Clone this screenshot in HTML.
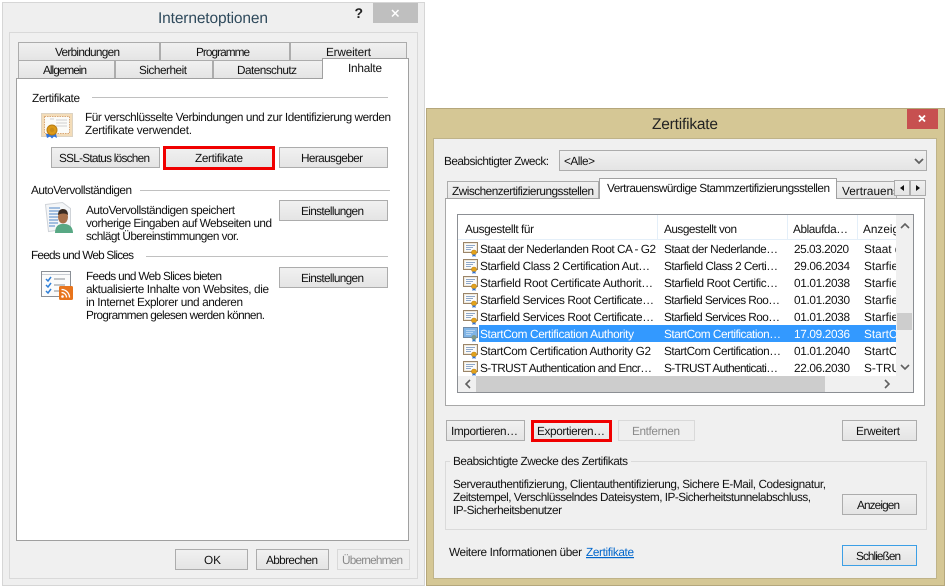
<!DOCTYPE html>
<html><head><meta charset="utf-8"><style>
html,body{margin:0;padding:0;background:#fff;width:948px;height:588px;overflow:hidden}
svg{display:block}
text{font-family:"Liberation Sans",sans-serif;font-size:11.8px;fill:#111;text-rendering:geometricPrecision}
.b{fill:url(#g);stroke:#acacac}
.d{fill:#efefef;stroke:#d9d9d9}
.t{fill:url(#g);stroke:#acacac}
.w{fill:#fff}
.dis{fill:#8a8a8a}
.l{stroke:#c0c0c0;stroke-width:1;fill:none}
.ar{fill:none;stroke:#606060;stroke-width:1.6}
</style></head><body>
<svg width="948" height="588" viewBox="0 0 948 588" xmlns="http://www.w3.org/2000/svg">
<defs>
<linearGradient id="g" x1="0" y1="0" x2="0" y2="1"><stop offset="0" stop-color="#f1f1f1"/><stop offset="1" stop-color="#e4e4e4"/></linearGradient>
<clipPath id="c1"><rect x="458" y="240" width="438" height="136"/></clipPath>
<clipPath id="c2"><rect x="836" y="180" width="58" height="18"/></clipPath>
<clipPath id="c3"><rect x="858" y="216" width="38" height="23"/></clipPath>
<symbol id="ci" viewBox="0 0 16 16" width="16" height="16">
<rect x="0.5" y="0.5" width="14" height="10" fill="#efe9dc" stroke="#9a8468"/>
<rect x="2" y="2" width="11" height="7" fill="#fbfbfb"/>
<path d="M3 3.500h9M3 5.500h7M3 7.500h5" stroke="#8fa8c8" fill="none"/>
<circle cx="11" cy="10.500" r="2.500" fill="#e2a21c" stroke="#c08412" stroke-width=".6"/>
<path d="M9.500 12.500v2.500l1.500-1 1.500 1v-2.500z" fill="#2f6fd0"/>
</symbol>
<symbol id="cs" viewBox="0 0 16 16" width="16" height="16">
<rect x="0.500" y="0.500" width="14" height="10" fill="#7fb4e6" stroke="#6f8aa6"/>
<path d="M3 3.500h9M3 5.500h7M3 7.500h5" stroke="#b8d6f2" fill="none"/>
<circle cx="11" cy="10.500" r="2.500" fill="#7f9a8a"/>
<path d="M9.500 12.500v2.500l1.500-1 1.500 1v-2.500z" fill="#2f78c8"/>
</symbol>
</defs>

<!-- LEFT DIALOG -->
<rect x="2.500" y="2.500" width="422" height="583" fill="#efefef" stroke="#d6d6d6"/>
<rect x="373" y="3" width="45" height="20" fill="#bfbfbf"/>
<path d="M392 10l6.500 6.500M398.500 10l-6.500 6.500" stroke="#fff" stroke-width="1.500" fill="none"/>
<text x="354.500" y="18" style="font-size:14px;font-weight:bold;fill:#222">?</text>
<text x="158" y="23" textLength="110" style="font-size:15.500px;fill:#2f4a5c">Internetoptionen</text>
<rect x="9.500" y="32.500" width="408" height="546" fill="#f0f0f0" stroke="#d9d9d9"/>

<!-- tabs back -->
<rect class="t" x="18.500" y="42.500" width="141" height="18"/>
<rect class="t" x="160.500" y="42.500" width="129" height="18"/>
<rect class="t" x="290.500" y="42.500" width="116" height="18"/>
<text x="55" y="56" textLength="65">Verbindungen</text>
<text x="196" y="56" textLength="54">Programme</text>
<text x="326" y="56" textLength="45">Erweitert</text>
<!-- tabs front -->
<rect class="t" x="18.500" y="60.500" width="96" height="18"/>
<rect class="t" x="115.500" y="60.500" width="97" height="18"/>
<rect class="t" x="213.500" y="60.500" width="109" height="18"/>
<text x="43" y="74" textLength="44">Allgemein</text>
<text x="139" y="74" textLength="48">Sicherheit</text>
<text x="237" y="74" textLength="60">Datenschutz</text>
<!-- panel -->
<rect x="16.500" y="78.500" width="392" height="462" fill="#fff" stroke="#a0a0a0"/>
<path d="M322.500 79V58.500H408.500V79" fill="#fff" stroke="#a0a0a0"/>
<rect x="323" y="76" width="85" height="4" fill="#fff"/>
<text x="348" y="72" textLength="34">Inhalte</text>

<text x="32" y="102" textLength="48">Zertifikate</text>
<path class="l" d="M92 97.500H388"/>
<text x="85" y="121" textLength="306">Für verschlüsselte Verbindungen und zur Identifizierung werden</text>
<text x="85" y="134" textLength="107">Zertifikate verwendet.</text>

<!-- cert icon -->
<rect x="41.500" y="113.500" width="31" height="23" fill="#f3dcb8" stroke="#dcd3c4"/>
<rect x="44.500" y="116.500" width="25" height="17" fill="#fbfbf8" stroke="#d9a878" stroke-dasharray="1.500 1"/>
<path d="M56 120h11M56 123h11M56 126h11M50 119h4" stroke="#cfcfcf" fill="none"/>
<path d="M46 134l1 4 3-1.500 2 2 2-2 3 1.500-1-4z" fill="#2f74dc"/>
<circle cx="52" cy="130" r="5" fill="#dc9a18" stroke="#b87c12"/>
<circle cx="52" cy="130" r="2.200" fill="#c98c18"/>

<rect class="b" x="51.500" y="147.500" width="108" height="20"/>
<text x="59" y="162" textLength="91">SSL-Status löschen</text>
<rect x="164.500" y="147.500" width="109" height="21" fill="url(#g)" stroke="#f00000" stroke-width="3"/>
<text x="195" y="162" textLength="48">Zertifikate</text>
<rect class="b" x="279.500" y="147.500" width="108" height="20"/>
<text x="301" y="162" textLength="62">Herausgeber</text>

<text x="31" y="194" textLength="101">AutoVervollständigen</text>
<path class="l" d="M140 190.500H390"/>
<text x="86" y="214" textLength="149">AutoVervollständigen speichert</text>
<text x="86" y="227" textLength="186">vorherige Eingaben auf Webseiten und</text>
<text x="86" y="240" textLength="153">schlägt Übereinstimmungen vor.</text>
<rect class="b" x="279.500" y="200.500" width="108" height="20"/>
<text x="301" y="215" textLength="63">Einstellungen</text>

<!-- person icon -->
<path d="M45.500 204.500L62.500 202.500L70.500 208.500V228.500L48.500 231.500Z" fill="#f4f6f8" stroke="#cfd3d8"/>
<path d="M49 208h11M49 211h11M49 214h9M49 217h9M49 220h9M49 223h9M49 226h6" stroke="#4f86c6" fill="none"/>
<path d="M55 233c0-6 3-9 7-9h3c4 0 8 3 8 9z" fill="#58a884"/>
<ellipse cx="63" cy="217" rx="5" ry="6.500" fill="#a8704a"/>
<path d="M58 215c0-5 3-6 5-6 3 0 5 2 5 6-2-2-7-2-10 0z" fill="#3b2c22"/>

<text x="31" y="259" textLength="103">Feeds und Web Slices</text>
<path class="l" d="M146 256.500H388"/>
<text x="86" y="280" textLength="136">Feeds und Web Slices bieten</text>
<text x="86" y="293" textLength="183">aktualisierte Inhalte von Websites, die</text>
<text x="86" y="306" textLength="157">in Internet Explorer und anderen</text>
<text x="86" y="319" textLength="179">Programmen gelesen werden können.</text>
<rect class="b" x="279.500" y="267.500" width="108" height="20"/>
<text x="301" y="282" textLength="63">Einstellungen</text>

<!-- feeds icon -->
<rect x="41.500" y="271.500" width="29" height="25" fill="#fbfbfb" stroke="#8a8f96"/>
<path d="M42 274.500h28" stroke="#c8ccd2"/>
<path d="M46 279l2 2 3-4M46 285l2 2 3-4M46 291l2 2 3-4" stroke="#2f7fd8" stroke-width="1.500" fill="none"/>
<path d="M54 279h11M54 285h11M54 291h8" stroke="#8a8f96" fill="none"/>
<rect x="59" y="286" width="14" height="14" rx="1.500" fill="#e8741c"/>
<circle cx="62.500" cy="296.500" r="1.300" fill="#fff"/>
<path d="M61.500 292.500a5 5 0 0 1 5 5M61.500 289.500a8 8 0 0 1 8 8" stroke="#fff" stroke-width="1.300" fill="none"/>

<rect class="b" x="175.500" y="549.500" width="72" height="20"/>
<text x="204" y="564">OK</text>
<rect class="b" x="256.500" y="549.500" width="72" height="20"/>
<text x="266" y="564" textLength="52">Abbrechen</text>
<rect class="d" x="337.500" y="549.500" width="72" height="20"/>
<text x="342" y="564" textLength="61" class="dis">Übernehmen</text>

<!-- RIGHT DIALOG -->
<rect x="426.500" y="108.500" width="518" height="477" fill="#d5c795" stroke="#b5a77c"/>
<rect x="907" y="109" width="31" height="20" fill="#c75050"/>
<path d="M919 115.500l6 6M925 115.500l-6 6" stroke="#fff" stroke-width="1.800" fill="none"/>
<text x="652" y="129" textLength="66" style="font-size:15.500px;fill:#222">Zertifikate</text>
<rect x="433.500" y="138.500" width="503" height="440" fill="#f0f0f0" stroke="#bfb389"/>

<text x="444" y="165" textLength="105">Beabsichtigter Zweck:</text>
<rect class="b" x="559.500" y="150.500" width="367" height="20"/>
<text x="564" y="165" textLength="31">&lt;Alle&gt;</text>
<path d="M915 159l4 4 4-4" fill="none" stroke="#606060" stroke-width="1.800"/>

<rect class="t" x="447.500" y="181.500" width="151" height="18"/>
<text x="452" y="195" textLength="142">Zwischenzertifizierungsstellen</text>
<rect class="t" x="836.500" y="181.500" width="60" height="18"/>
<g clip-path="url(#c2)"><text x="842" y="195">Vertrauenswürdige Herausgeber</text></g>

<rect x="445.500" y="198.500" width="479" height="300" fill="#fff" stroke="#a0a0a0"/>
<path d="M599.500 199V178.500H836.500V199" fill="#fff" stroke="#a0a0a0"/>
<rect x="600" y="196" width="236" height="4" fill="#fff"/>
<text x="607" y="192" textLength="223">Vertrauenswürdige Stammzertifizierungsstellen</text>

<rect class="b" x="894.500" y="180.500" width="15" height="15"/>
<rect class="b" x="910.500" y="180.500" width="15" height="15"/>
<path d="M904 185v6l-4-3z" fill="#111"/>
<path d="M916 185v6l4-3z" fill="#111"/>

<!-- panel lower cover -->
<rect x="445" y="406" width="481" height="100" fill="#f0f0f0"/>
<path d="M445.500 199V406M924.500 199V406M445 405.500H925" stroke="#a8a8a8" fill="none"/>

<!-- list -->
<rect x="457.500" y="214.500" width="456" height="178" fill="#fff" stroke="#8c8f94"/>
<path d="M458 239.500H896M657.500 215V239M787.500 215V239M857.500 215V239" stroke="#e4eff9" fill="none"/>
<text x="465" y="233" textLength="69">Ausgestellt für</text>
<text x="664" y="233" textLength="73">Ausgestellt von</text>
<text x="793" y="233" textLength="55">Ablaufda…</text>
<g clip-path="url(#c3)"><text x="863" y="233">Anzeigename</text></g>

<rect x="479" y="325" width="417" height="17" fill="#3399ff"/>
<use href="#ci" x="463" y="242"/><use href="#ci" x="463" y="259"/><use href="#ci" x="463" y="276"/><use href="#ci" x="463" y="293"/><use href="#ci" x="463" y="310"/>
<use href="#cs" x="463" y="327"/>
<use href="#ci" x="463" y="344"/><use href="#ci" x="463" y="361"/>

<g clip-path="url(#c1)">
<text x="480" y="253" textLength="176">Staat der Nederlanden Root CA - G2</text>
<text x="664" y="253" textLength="114">Staat der Nederlande…</text>
<text x="794" y="253" textLength="55">25.03.2020</text>
<text x="864" y="253">Staat der Nederlanden</text>

<text x="480" y="270" textLength="170">Starfield Class 2 Certification Aut…</text>
<text x="664" y="270" textLength="114">Starfield Class 2 Certi…</text>
<text x="794" y="270" textLength="56">29.06.2034</text>
<text x="864" y="270">Starfield Class 2</text>

<text x="480" y="287" textLength="173">Starfield Root Certificate Authorit…</text>
<text x="664" y="287" textLength="114">Starfield Root Certific…</text>
<text x="794" y="287" textLength="56">01.01.2038</text>
<text x="864" y="287">Starfield Root</text>

<text x="480" y="304" textLength="174">Starfield Services Root Certificate…</text>
<text x="664" y="304" textLength="116">Starfield Services Roo…</text>
<text x="794" y="304" textLength="56">01.01.2030</text>
<text x="864" y="304">Starfield Services</text>

<text x="480" y="321" textLength="174">Starfield Services Root Certificate…</text>
<text x="664" y="321" textLength="116">Starfield Services Roo…</text>
<text x="794" y="321" textLength="56">01.01.2038</text>
<text x="864" y="321">Starfield Services</text>

<text x="480" y="338" textLength="154" class="w">StartCom Certification Authority</text>
<text x="664" y="338" textLength="117" class="w">StartCom Certification…</text>
<text x="794" y="338" textLength="56" class="w">17.09.2036</text>
<text x="864" y="338" class="w">StartCom Certification</text>

<text x="480" y="355" textLength="171">StartCom Certification Authority G2</text>
<text x="664" y="355" textLength="117">StartCom Certification…</text>
<text x="794" y="355" textLength="56">01.01.2040</text>
<text x="864" y="355">StartCom Certification</text>

<text x="480" y="372" textLength="172">S-TRUST Authentication and Encr…</text>
<text x="664" y="372" textLength="114">S-TRUST Authenticati…</text>
<text x="794" y="372" textLength="56">22.06.2030</text>
<text x="864" y="372">S-TRUST</text>
</g>

<!-- scrollbars -->
<rect x="896" y="215" width="17" height="177" fill="#f0f0f0"/>
<rect x="897" y="313" width="15" height="17" fill="#cdcdcd"/>
<path class="ar" d="M901 228l4-4 4 4M901 365l4 4 4-4"/>
<rect x="458" y="376" width="438" height="16" fill="#f0f0f0"/>
<rect x="476" y="376" width="349" height="16" fill="#cdcdcd"/>
<path class="ar" d="M470 380l-4 4 4 4M885 380l4 4-4 4"/>

<!-- buttons -->
<rect class="b" x="446.500" y="420.500" width="78" height="20"/>
<text x="451" y="435" textLength="67">Importieren…</text>
<rect x="532.500" y="421.500" width="78" height="19" fill="url(#g)" stroke="#f00000" stroke-width="3"/>
<text x="537" y="435" textLength="68">Exportieren…</text>
<rect class="d" x="618.500" y="420.500" width="76" height="20"/>
<text x="632" y="435" textLength="48" class="dis">Entfernen</text>
<rect class="b" x="842.500" y="420.500" width="74" height="20"/>
<text x="856" y="435" textLength="44">Erweitert</text>

<rect x="445.500" y="461.500" width="481" height="68" fill="none" stroke="#dadada"/>
<rect x="450" y="456" width="181" height="10" fill="#f0f0f0"/>
<text x="453" y="465" textLength="175">Beabsichtigte Zwecke des Zertifikats</text>
<text x="453" y="488" textLength="373">Serverauthentifizierung, Clientauthentifizierung, Sichere E-Mail, Codesignatur,</text>
<text x="453" y="501" textLength="358">Zeitstempel, Verschlüsselndes Dateisystem, IP-Sicherheitstunnelabschluss,</text>
<text x="453" y="514" textLength="109">IP-Sicherheitsbenutzer</text>
<rect class="b" x="842.500" y="494.500" width="74" height="20"/>
<text x="857" y="509" textLength="43">Anzeigen</text>

<text x="449" y="556" textLength="133">Weitere Informationen über</text>
<text x="586" y="556" textLength="48" style="fill:#0066cc;text-decoration:underline">Zertifikate</text>
<rect x="842.500" y="545.500" width="74" height="20" fill="url(#g)" stroke="#3c9fe6"/>
<text x="856" y="560" textLength="45">Schließen</text>
</svg>
</body></html>
